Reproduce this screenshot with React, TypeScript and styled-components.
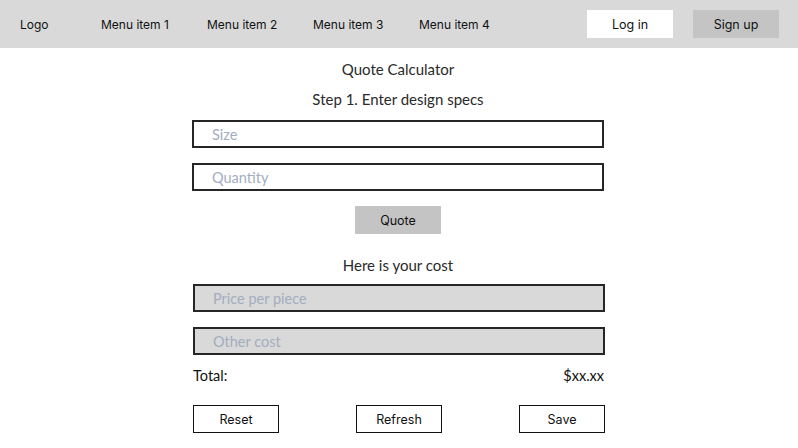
import React from "react";
import styled, { createGlobalStyle } from "styled-components";

const Global = createGlobalStyle`
  html, body { margin: 0; padding: 0; background: #fff; }
  body { font-family: Lato, "Open Sans", sans-serif; color: #222; }
  * { box-sizing: border-box; }
`;

const Header = styled.header`
  height: 48px;
  background: #d9d9d9;
  display: flex;
  align-items: center;
  padding: 0 19px 0 20px;
  font-family: Inter, "Liberation Sans", sans-serif;
  font-size: 12px;
  color: #111;
`;

const Logo = styled.div`
  width: 81px;
`;

const Nav = styled.nav`
  display: flex;
  flex: 1;
`;

const NavItem = styled.a`
  width: 106px;
  color: #111;
  text-decoration: none;
`;

const HeaderButton = styled.button<{ $variant: "light" | "dark" }>`
  width: 86px;
  height: 28px;
  border: none;
  margin-left: ${(p) => (p.$variant === "dark" ? "20px" : "0")};
  background: ${(p) => (p.$variant === "light" ? "#ffffff" : "#c4c4c4")};
  font-family: Inter, "Liberation Sans", sans-serif;
  font-size: 12.5px;
  color: #111;
  padding: 0;
`;

const Page = styled.div`
  display: flex;
  justify-content: center;
  padding-right: 2px;
`;

const Main = styled.main`
  width: 412px;
  display: flex;
  flex-direction: column;
  align-items: stretch;
`;

const Heading = styled.div<{ $mt: number }>`
  margin-top: ${(p) => p.$mt}px;
  height: 20px;
  line-height: 20px;
  text-align: center;
  font-size: 15px;
  color: #2a2a2a;
`;

const Field = styled.div<{ $filled?: boolean; $mt: number; $shift?: number }>`
  margin-top: ${(p) => p.$mt}px;
  margin-left: ${(p) => p.$shift ?? 0}px;
  margin-right: ${(p) => -(p.$shift ?? 0)}px;
  height: 28px;
  border: 2px solid #262626;
  background: ${(p) => (p.$filled ? "#d9d9d9" : "#fff")};
  display: flex;
  align-items: center;
  padding-left: 18px;
  font-size: 14.5px;
  color: #a3adbf;
`;

const CenterButton = styled.button`
  align-self: center;
  margin-top: 15px;
  width: 86px;
  height: 28px;
  border: none;
  background: #c4c4c4;
  font-family: Inter, "Liberation Sans", sans-serif;
  font-size: 12.5px;
  color: #111;
  padding: 0;
`;

const TotalRow = styled.div`
  margin-top: 11px;
  height: 20px;
  line-height: 20px;
  display: flex;
  justify-content: space-between;
  font-size: 14.5px;
  color: #111;
  padding-left: 1px;
`;

const ActionRow = styled.div`
  margin-top: 19px;
  margin-left: 1px;
  margin-right: -1px;
  display: flex;
  justify-content: space-between;
`;

const OutlineButton = styled.button`
  width: 86px;
  height: 28px;
  border: 1.5px solid #111;
  background: #fff;
  font-family: Inter, "Liberation Sans", sans-serif;
  font-size: 12.5px;
  color: #111;
  padding: 0;
`;

export default function App() {
  return (
    <>
      <Global />
      <Header>
        <Logo>Logo</Logo>
        <Nav>
          <NavItem>Menu item 1</NavItem>
          <NavItem>Menu item 2</NavItem>
          <NavItem>Menu item 3</NavItem>
          <NavItem>Menu item 4</NavItem>
        </Nav>
        <HeaderButton $variant="light">Log in</HeaderButton>
        <HeaderButton $variant="dark">Sign up</HeaderButton>
      </Header>
      <Page>
        <Main>
          <Heading $mt={11}>Quote Calculator</Heading>
          <Heading $mt={10}>Step 1. Enter design specs</Heading>
          <Field $mt={11}>Size</Field>
          <Field $mt={15}>Quantity</Field>
          <CenterButton>Quote</CenterButton>
          <Heading $mt={21}>Here is your cost</Heading>
          <Field $mt={9} $filled $shift={1}>Price per piece</Field>
          <Field $mt={15} $filled $shift={1}>Other cost</Field>
          <TotalRow>
            <span>Total:</span>
            <span>$xx.xx</span>
          </TotalRow>
          <ActionRow>
            <OutlineButton>Reset</OutlineButton>
            <OutlineButton>Refresh</OutlineButton>
            <OutlineButton>Save</OutlineButton>
          </ActionRow>
        </Main>
      </Page>
    </>
  );
}
